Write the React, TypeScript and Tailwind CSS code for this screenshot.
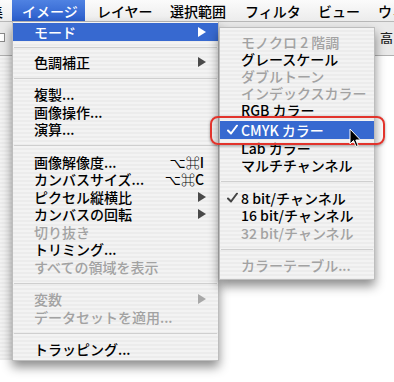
import React from 'react';

type Row =
  | { sep: number }
  | {
      label: string;
      arrow?: boolean;
      active?: boolean;
      disabled?: boolean;
      shortcut?: string;
      check?: boolean;
      h?: number;
    };

const MENUBAR = [
  { label: '集', w: 'w-[33px] ml-[-21px]' },
  { label: 'イメージ', w: 'w-[73px]', on: true },
  { label: 'レイヤー', w: 'w-[73px] ml-[2px]' },
  { label: '選択範囲', w: 'w-[75px]' },
  { label: 'フィルタ', w: 'w-[73px]' },
  { label: 'ビュー', w: 'w-[60px]' },
  { label: 'ウィンドウ', w: 'w-[90px]' },
];

const MAIN: Row[] = [
  { label: 'モード', arrow: true, active: true, h: 18 },
  { sep: 12 },
  { label: '色調補正', arrow: true },
  { sep: 15 },
  { label: '複製...' },
  { label: '画像操作...' },
  { label: '演算...' },
  { sep: 15 },
  { label: '画像解像度...', shortcut: '⌥⌘I' },
  { label: 'カンバスサイズ...', shortcut: '⌥⌘C' },
  { label: 'ピクセル縦横比', arrow: true },
  { label: 'カンバスの回転', arrow: true },
  { label: '切り抜き', disabled: true },
  { label: 'トリミング...' },
  { label: 'すべての領域を表示', disabled: true },
  { sep: 15 },
  { label: '変数', arrow: true, disabled: true },
  { label: 'データセットを適用...', disabled: true },
  { sep: 15 },
  { label: 'トラッピング...' },
];

const SUB: Row[] = [
  { label: 'モノクロ 2 階調', disabled: true, h: 17 },
  { label: 'グレースケール', h: 17 },
  { label: 'ダブルトーン', disabled: true, h: 17 },
  { label: 'インデックスカラー', disabled: true, h: 17 },
  { label: 'RGB カラー', h: 17 },
  { sep: 3 },
  { label: 'CMYK カラー', active: true, check: true, h: 18 },
  { label: 'Lab カラー' },
  { label: 'マルチチャンネル' },
  { sep: 15 },
  { label: '8 bit/チャンネル', check: true },
  { label: '16 bit/チャンネル' },
  { label: '32 bit/チャンネル', disabled: true },
  { sep: 15 },
  { label: 'カラーテーブル...', disabled: true },
];

function Arrow({ color }: { color: string }) {
  return (
    <svg width="8" height="10" viewBox="0 0 8 10" className="absolute right-[12px] top-1/2 -translate-y-1/2">
      <path d="M0 0 L8 5 L0 10 Z" fill={color} />
    </svg>
  );
}

function Check({ color }: { color: string }) {
  return (
    <svg width="11" height="11" viewBox="0 0 11 11" className="absolute left-[7px] top-1/2 -translate-y-1/2">
      <path d="M1 6 L4 9 L10 1" fill="none" stroke={color} strokeWidth="2" strokeLinecap="round" strokeLinejoin="round" />
    </svg>
  );
}

function MenuRows({ rows }: { rows: Row[] }) {
  return (
    <>
      {rows.map((r, i) => {
        if ('sep' in r) {
          return (
            <div key={i} className="flex items-center px-[1px]" style={{ height: r.sep }}>
              {r.sep > 5 && <div className="h-px w-full bg-[#cfcfcf]" />}
            </div>
          );
        }
        const txt = r.active ? 'text-white' : r.disabled ? 'text-[#a2a2a2]' : 'text-black';
        return (
          <div
            key={i}
            className={`relative flex items-center pl-[21px] pr-[14px] ${txt} ${r.active ? 'bg-[#3769d0]' : ''}`}
            style={{ height: r.h ?? 17.5 }}
          >
            {r.check && <Check color={r.active ? '#ffffff' : '#444444'} />}
            <span className="whitespace-pre">{r.label}</span>
            {r.shortcut && <span className="ml-auto">{r.shortcut}</span>}
            {r.arrow && <Arrow color={r.active ? '#ffffff' : r.disabled ? '#a8a8a8' : '#4a4a4a'} />}
          </div>
        );
      })}
    </>
  );
}

const stripes =
  'bg-[repeating-linear-gradient(180deg,#f3f3f3_0px,#f3f3f3_2px,#ececec_2px,#ececec_4px)]';

export default function App() {
  return (
    <div className="relative h-[382px] w-[394px] overflow-hidden bg-white font-['Noto_Sans_CJK_JP','DejaVu_Sans',sans-serif] text-[14px] font-medium leading-none">
      {/* menu bar */}
      <div className="flex h-[22px] items-stretch border-b border-[#b8b8b8] bg-[linear-gradient(180deg,#fbfbfb,#ececec)]">
        {MENUBAR.map((m) => (
          <div
            key={m.label}
            className={`flex shrink-0 items-center whitespace-nowrap pl-[10px] ${m.w} ${m.on ? 'bg-[linear-gradient(180deg,#4f82e2,#2a5dcb)] text-white' : 'text-black'}`}
          >
            {m.label}
          </div>
        ))}
      </div>

      {/* options bar behind */}
      <div className="flex h-[34px] items-center justify-between border-b border-[#b0b0b0] bg-[#e9e9e9] pb-[2px]">
        <div className="ml-[-4px] h-[9px] w-[9px] border border-[#8a8a8a] bg-white" />
        <span className="w-[14px] overflow-hidden whitespace-nowrap text-[13px] text-[#222]">高さ</span>
      </div>
      <div className={`h-[304px] w-[12px] ${stripes}`} />

      {/* main menu */}
      <div
        className={`absolute left-[12px] top-[22px] w-[207px] pt-[1px] pb-[2px] ${stripes} border-x border-b border-[#bdbdbd] shadow-[0_6px_10px_rgba(0,0,0,0.45)]`}
      >
        <MenuRows rows={MAIN} />
      </div>

      {/* submenu */}
      <div
        className={`absolute left-[219px] top-[27px] w-[156px] pt-[5px] pb-[5px] ${stripes} border border-[#bdbdbd] shadow-[0_6px_10px_rgba(0,0,0,0.45)]`}
      >
        <MenuRows rows={SUB} />
      </div>

      {/* red highlight ring */}
      <div className="absolute left-[210px] top-[116px] h-[29px] w-[175px] rounded-[8px] border-2 border-[#e2342c] shadow-[0_1px_3px_rgba(0,0,0,0.35)]" />

      {/* cursor */}
      <svg width="13" height="20" viewBox="0 0 13 20" className="absolute left-[349px] top-[128px]">
        <path d="M1 1 L1 16 L4.5 12.5 L7 18.5 L9.2 17.6 L6.8 12 L11.5 12 Z" fill="#000" stroke="#fff" strokeWidth="1" />
      </svg>
    </div>
  );
}
